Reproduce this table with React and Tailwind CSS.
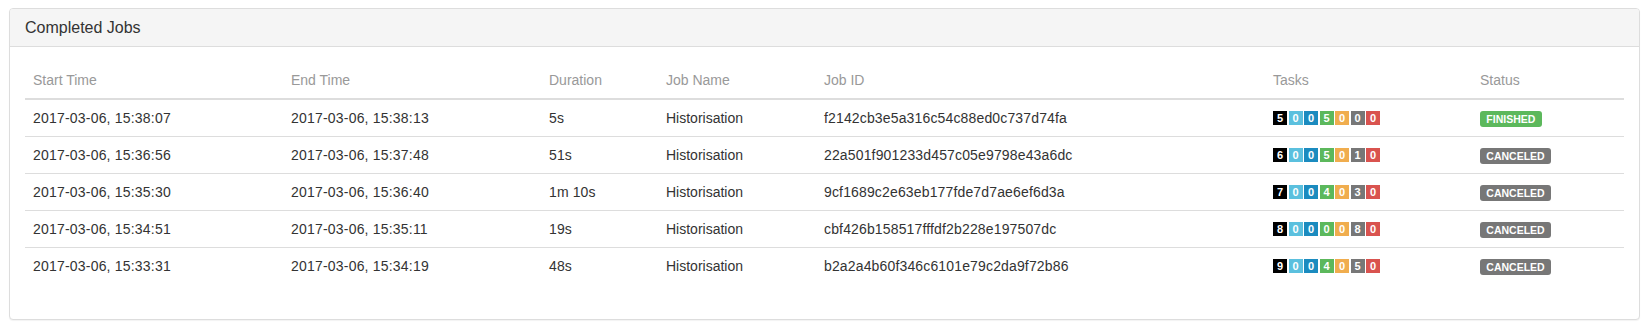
import React from "react";

const rows = [
  { start: "2017-03-06, 15:38:07", end: "2017-03-06, 15:38:13", dur: "5s", name: "Historisation", id: "f2142cb3e5a316c54c88ed0c737d74fa", tasks: [5, 0, 0, 5, 0, 0, 0], status: "FINISHED" },
  { start: "2017-03-06, 15:36:56", end: "2017-03-06, 15:37:48", dur: "51s", name: "Historisation", id: "22a501f901233d457c05e9798e43a6dc", tasks: [6, 0, 0, 5, 0, 1, 0], status: "CANCELED" },
  { start: "2017-03-06, 15:35:30", end: "2017-03-06, 15:36:40", dur: "1m 10s", name: "Historisation", id: "9cf1689c2e63eb177fde7d7ae6ef6d3a", tasks: [7, 0, 0, 4, 0, 3, 0], status: "CANCELED" },
  { start: "2017-03-06, 15:34:51", end: "2017-03-06, 15:35:11", dur: "19s", name: "Historisation", id: "cbf426b158517fffdf2b228e197507dc", tasks: [8, 0, 0, 0, 0, 8, 0], status: "CANCELED" },
  { start: "2017-03-06, 15:33:31", end: "2017-03-06, 15:34:19", dur: "48s", name: "Historisation", id: "b2a2a4b60f346c6101e79c2da9f72b86", tasks: [9, 0, 0, 4, 0, 5, 0], status: "CANCELED" },
];

const badgeColors = [
  "bg-[#000000]",
  "bg-[#5bc0de]",
  "bg-[#1b8bbf]",
  "bg-[#5cb85c]",
  "bg-[#f0ad4e]",
  "bg-[#777777]",
  "bg-[#d9534f]",
];

function Tasks({ values }) {
  return (
    <div className="flex items-center gap-[1.5px]">
      {values.map((v, i) => (
        <span
          key={i}
          className={`${badgeColors[i]} w-[14px] h-[14px] flex items-center justify-center text-white font-bold text-[11px] leading-none`}
        >
          {v}
        </span>
      ))}
    </div>
  );
}

function Status({ s }) {
  const bg = s === "FINISHED" ? "bg-[#5cb85c]" : "bg-[#777777]";
  return (
    <span
      className={`${bg} inline-block text-white font-bold text-[10.5px] leading-none pt-[2.5px] pb-[3px] px-[6.3px] rounded-[3px] align-middle`}
    >
      {s}
    </span>
  );
}

export default function App() {
  return (
    <div
      className="bg-white w-[1649px] h-[334px] pt-[8px] px-[9px]"
      style={{ fontFamily: '"Liberation Sans", Arial, sans-serif' }}
    >
      <div className="border border-[#dddddd] rounded-[4px] shadow-[0_1px_1px_rgba(0,0,0,0.05)] bg-white">
        <div className="bg-[#f5f5f5] border-b border-[#dddddd] rounded-t-[3px] px-[15px] py-[10px] text-[16px] leading-[17px] text-[#333333]">
          Completed Jobs
        </div>
        <div className="p-[15px]">
          <table className="w-full table-fixed border-collapse text-[14px] leading-[20px] text-[#333333] mb-[20px]">
            <thead>
              <tr>
                <th className="w-[258px] text-left font-normal text-[#999999] p-[8px] border-b-2 border-[#dddddd]">Start Time</th>
                <th className="w-[258px] text-left font-normal text-[#999999] p-[8px] border-b-2 border-[#dddddd]">End Time</th>
                <th className="w-[117px] text-left font-normal text-[#999999] p-[8px] border-b-2 border-[#dddddd]">Duration</th>
                <th className="w-[158px] text-left font-normal text-[#999999] p-[8px] border-b-2 border-[#dddddd]">Job Name</th>
                <th className="w-[449px] text-left font-normal text-[#999999] p-[8px] border-b-2 border-[#dddddd]">Job ID</th>
                <th className="w-[207px] text-left font-normal text-[#999999] p-[8px] border-b-2 border-[#dddddd]">Tasks</th>
                <th className="text-left font-normal text-[#999999] p-[8px] border-b-2 border-[#dddddd]">Status</th>
              </tr>
            </thead>
            <tbody>
              {rows.map((r, i) => (
                <tr key={i} className={i > 0 ? "border-t border-[#dddddd]" : ""}>
                  <td className="p-[8px] tracking-[0.2px]">{r.start}</td>
                  <td className="p-[8px] tracking-[0.2px]">{r.end}</td>
                  <td className="p-[8px] tracking-[0.1px]">{r.dur}</td>
                  <td className="p-[8px]">{r.name}</td>
                  <td className="p-[8px] tracking-[0.15px]">{r.id}</td>
                  <td className="p-[8px]"><Tasks values={r.tasks} /></td>
                  <td className="p-[8px]"><Status s={r.status} /></td>
                </tr>
              ))}
            </tbody>
          </table>
        </div>
      </div>
    </div>
  );
}
